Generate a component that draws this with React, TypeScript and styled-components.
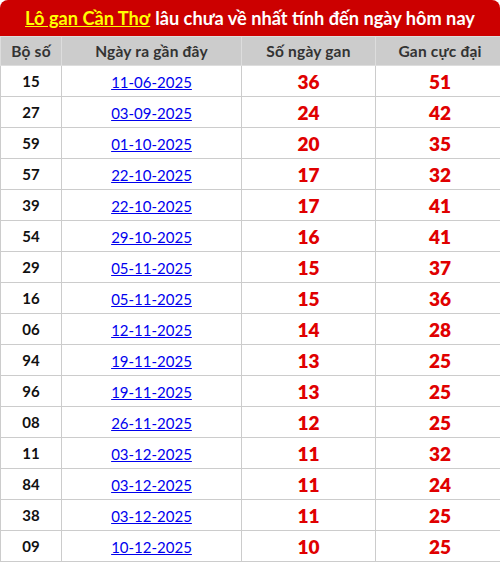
import React from "react";
import styled, { createGlobalStyle } from "styled-components";

const Global = createGlobalStyle`
  html, body { margin: 0; padding: 0; background: #fff; }
  body { font-family: "Lato", "Open Sans", sans-serif; }
`;

const Wrap = styled.div`
  width: 500px;
`;

const Title = styled.div`
  height: 36px;
  background: #cc0000;
  border-radius: 8px 8px 0 0;
  color: #fff;
  font-weight: 700;
  font-size: 18.2px;
  display: flex;
  align-items: center;
  justify-content: center;
  white-space: nowrap;
`;

const Hl = styled.span`
  color: #ffff00;
  text-decoration: underline;
  margin-right: 5px;
`;

const Table = styled.table`
  width: 500px;
  border-collapse: collapse;
  table-layout: fixed;
  border: 1px solid #cccccc;
`;

const Th = styled.th<{ $w: number }>`
  width: ${(p) => p.$w}px;
  height: 28px;
  background: #cccccc;
  color: #333;
  font-weight: 700;
  font-size: 15.5px;
  letter-spacing: 0.2px;
  text-align: center;
  border: 1px solid #dddddd;
  padding: 0;
`;

const Td = styled.td`
  height: 30px;
  border: 1px solid #cccccc;
  text-align: center;
  padding: 0;
`;

const Num = styled(Td)`
  color: #111;
  font-weight: 700;
  font-size: 15px;
`;

const DateLink = styled.a`
  color: #0000ee;
  text-decoration: underline;
  font-size: 15px;
`;

const Red = styled(Td)`
  color: #e00000;
  font-weight: 800;
  font-size: 19px;
`;

const rows: [string, string, number, number][] = [
  ["15", "11-06-2025", 36, 51],
  ["27", "03-09-2025", 24, 42],
  ["59", "01-10-2025", 20, 35],
  ["57", "22-10-2025", 17, 32],
  ["39", "22-10-2025", 17, 41],
  ["54", "29-10-2025", 16, 41],
  ["29", "05-11-2025", 15, 37],
  ["16", "05-11-2025", 15, 36],
  ["06", "12-11-2025", 14, 28],
  ["94", "19-11-2025", 13, 25],
  ["96", "19-11-2025", 13, 25],
  ["08", "26-11-2025", 12, 25],
  ["11", "03-12-2025", 11, 32],
  ["84", "03-12-2025", 11, 24],
  ["38", "03-12-2025", 11, 25],
  ["09", "10-12-2025", 10, 25],
];

export default function App() {
  return (
    <Wrap>
      <Global />
      <Title>
        <Hl>Lô gan Cần Thơ</Hl> lâu chưa về nhất tính đến ngày hôm nay
      </Title>
      <Table>
        <thead>
          <tr>
            <Th $w={60}>Bộ số</Th>
            <Th $w={179}>Ngày ra gần đây</Th>
            <Th $w={133}>Số ngày gan</Th>
            <Th $w={128}>Gan cực đại</Th>
          </tr>
        </thead>
        <tbody>
          {rows.map((r, i) => (
            <tr key={i}>
              <Num>{r[0]}</Num>
              <Td>
                <DateLink href="#">{r[1]}</DateLink>
              </Td>
              <Red>{r[2]}</Red>
              <Red>{r[3]}</Red>
            </tr>
          ))}
        </tbody>
      </Table>
    </Wrap>
  );
}
